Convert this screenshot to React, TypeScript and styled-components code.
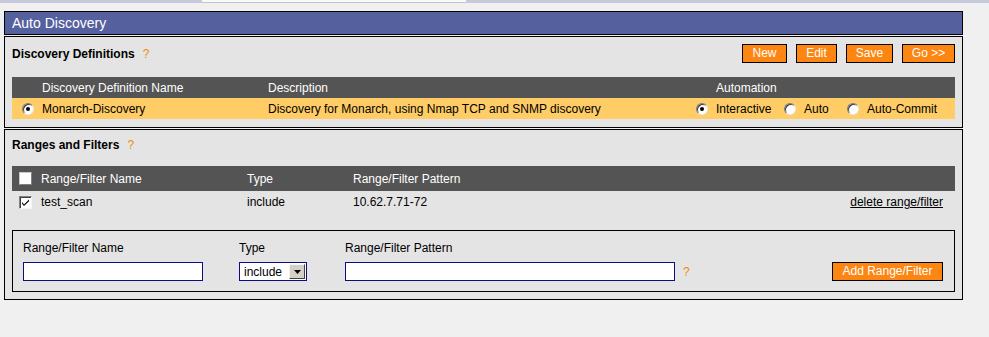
import React from 'react';
import styled, { createGlobalStyle } from 'styled-components';

const GlobalStyle = createGlobalStyle`
	html, body {
		margin: 0;
		padding: 0;
		background: #f0f0f0;
		font-family: "Liberation Sans", Arial, sans-serif;
		font-size: 12px;
		color: #000;
	}
`;

const TopStrip = styled.div`
	display: flex;
	height: 3px;
`;

const StripPart = styled.div<{ $w?: number; $active?: boolean }>`
	width: ${(p) => (p.$w ? `${p.$w}px` : 'auto')};
	flex: ${(p) => (p.$w ? 'none' : '1')};
	background: ${(p) => (p.$active ? '#fafafa' : '#c6c9da')};
	border-bottom: ${(p) => (p.$active ? '1px solid #c4c4c4' : 'none')};
	box-sizing: border-box;
`;

const Main = styled.div`
	width: 959px;
	margin: 8px 0 0 4px;
	display: flex;
	flex-direction: column;
	gap: 1px;
`;

const TitleBar = styled.div`
	height: 24px;
	box-sizing: border-box;
	border: 1px solid #000;
	background: #55609e;
	color: #fff;
	font-size: 14px;
	line-height: 22px;
	padding-left: 7px;
`;

const Section = styled.div<{ $h: number }>`
	height: ${(p) => p.$h}px;
	box-sizing: border-box;
	border: 1px solid #000;
	background: #e4e4e4;
	padding: 0 7px;
`;

const SectionHead = styled.div<{ $top: number; $h: number }>`
	display: flex;
	align-items: center;
	padding-top: ${(p) => p.$top}px;
	height: ${(p) => p.$h}px;
`;

const Heading = styled.span`
	font-weight: bold;
	font-size: 12px;
`;

const Help = styled.span`
	color: #f08a10;
	margin-left: 8px;
`;

const ButtonBar = styled.div`
	display: flex;
	gap: 9px;
	margin-left: auto;
`;

const OrangeButton = styled.button<{ $w: number }>`
	width: ${(p) => p.$w}px;
	height: 19px;
	box-sizing: border-box;
	border: 1px solid #000;
	background: #fd8612;
	color: #fff;
	font-family: "Liberation Sans", Arial, sans-serif;
	font-size: 12px;
	padding: 0;
	line-height: 17px;
	text-align: center;
`;

const DefTable = styled.div`
	margin-top: 14px;
	display: grid;
	grid-template-columns: 30px 226px 422px 1fr;
`;

const HeadCell = styled.div<{ $pad?: number; $h: number }>`
	background: #545454;
	color: #fff;
	height: ${(p) => p.$h}px;
	display: flex;
	align-items: center;
	padding-left: ${(p) => p.$pad ?? 0}px;
`;

const RowCell = styled.div<{ $pad?: number; $h: number; $bg?: string }>`
	background: ${(p) => p.$bg ?? 'transparent'};
	height: ${(p) => p.$h}px;
	display: flex;
	align-items: center;
	padding-left: ${(p) => p.$pad ?? 0}px;
`;

const Radio = styled.span<{ $checked?: boolean }>`
	position: relative;
	display: inline-block;
	width: 12px;
	height: 12px;
	box-sizing: border-box;
	border-radius: 50%;
	background: #fff;
	border: 1px solid;
	border-color: #7a7a7a #e8e8e8 #e8e8e8 #7a7a7a;
	box-shadow: inset 1px 1px 0 #3c3c3c;
	flex: none;

	&::after {
		content: '';
		display: ${(p) => (p.$checked ? 'block' : 'none')};
		position: absolute;
		left: 3px;
		top: 3px;
		width: 4px;
		height: 4px;
		border-radius: 50%;
		background: #000;
	}
`;

const RadioOption = styled.label<{ $w?: number }>`
	display: flex;
	align-items: center;
	gap: 8px;
	width: ${(p) => (p.$w ? `${p.$w}px` : 'auto')};
`;

const Checkbox = styled.span<{ $plain?: boolean }>`
	display: inline-flex;
	align-items: center;
	justify-content: center;
	width: 13px;
	height: 13px;
	box-sizing: border-box;
	background: #fff;
	border: 1px solid;
	border-color: ${(p) => (p.$plain ? '#c8c8c8 #808080 #808080 #c8c8c8' : '#808080 #f4f4f4 #f4f4f4 #808080')};
	box-shadow: ${(p) => (p.$plain ? 'none' : 'inset 1px 1px 0 #404040')};
	flex: none;
`;

const RangeTable = styled.div`
	margin-top: 13px;
	display: grid;
	grid-template-columns: 29px 206px 106px 1fr auto;
`;

const DeleteLink = styled.a`
	color: #000;
	text-decoration: underline;
	padding-right: 12px;
	cursor: pointer;
`;

const FormBox = styled.div`
	margin-top: 17px;
	box-sizing: border-box;
	border: 1px solid #000;
	padding: 10px;
	display: flex;
	align-items: flex-end;
`;

const Field = styled.div<{ $gap?: number }>`
	display: flex;
	flex-direction: column;
	gap: 7px;
	margin-right: ${(p) => p.$gap ?? 0}px;
`;

const FieldLabel = styled.label`
	line-height: 14px;
	height: 14px;
`;

const TextInput = styled.input<{ $w: number }>`
	width: ${(p) => p.$w}px;
	height: 19px;
	box-sizing: border-box;
	border: 1px solid #0c0c88;
	background: #fff;
	padding: 0 3px;
	margin: 0;
	font-family: "Liberation Sans", Arial, sans-serif;
	font-size: 12px;
	outline: none;
`;

const InputRow = styled.div`
	display: flex;
	align-items: center;
`;

const SelectBox = styled.div`
	width: 68px;
	height: 19px;
	box-sizing: border-box;
	border: 1px solid #0c0c88;
	background: #fff;
	display: flex;
	align-items: center;
	padding-left: 4px;
	gap: 2px;
`;

const SelectText = styled.span`
	flex: 1;
`;

const SelectArrow = styled.span`
	width: 16px;
	height: 15px;
	box-sizing: border-box;
	background: #d4d0c8;
	border: 1px solid;
	border-color: #f4f4f4 #404040 #404040 #f4f4f4;
	display: flex;
	align-items: center;
	justify-content: center;
	margin-right: 1px;
`;

const AddButton = styled(OrangeButton)`
	margin-left: auto;
	margin-right: 1px;
`;

export default function App() {
	return (
		<>
			<GlobalStyle />
			<TopStrip>
				<StripPart $w={202} />
				<StripPart $w={264} $active />
				<StripPart />
			</TopStrip>
			<Main>
				<TitleBar>Auto Discovery</TitleBar>

				<Section $h={92}>
					<SectionHead $top={7} $h={19}>
						<Heading>Discovery Definitions</Heading>
						<Help>?</Help>
						<ButtonBar>
							<OrangeButton $w={45}>New</OrangeButton>
							<OrangeButton $w={41}>Edit</OrangeButton>
							<OrangeButton $w={47}>Save</OrangeButton>
							<OrangeButton $w={53}>Go &gt;&gt;</OrangeButton>
						</ButtonBar>
					</SectionHead>
					<DefTable>
						<HeadCell $h={21} />
						<HeadCell $h={21}>Discovery Definition Name</HeadCell>
						<HeadCell $h={21}>Description</HeadCell>
						<HeadCell $h={21} $pad={26}>Automation</HeadCell>

						<RowCell $h={21} $bg="#ffcc66" $pad={10}>
							<Radio $checked />
						</RowCell>
						<RowCell $h={21} $bg="#ffcc66">Monarch-Discovery</RowCell>
						<RowCell $h={21} $bg="#ffcc66">Discovery for Monarch, using Nmap TCP and SNMP discovery</RowCell>
						<RowCell $h={21} $bg="#ffcc66" $pad={6}>
							<RadioOption $w={88}>
								<Radio $checked />
								Interactive
							</RadioOption>
							<RadioOption $w={63}>
								<Radio />
								Auto
							</RadioOption>
							<RadioOption>
								<Radio />
								Auto-Commit
							</RadioOption>
						</RowCell>
					</DefTable>
				</Section>

				<Section $h={171}>
					<SectionHead $top={6} $h={17}>
						<Heading>Ranges and Filters</Heading>
						<Help>?</Help>
					</SectionHead>
					<RangeTable>
						<HeadCell $h={25} $pad={7}>
							<Checkbox $plain />
						</HeadCell>
						<HeadCell $h={25}>Range/Filter Name</HeadCell>
						<HeadCell $h={25}>Type</HeadCell>
						<HeadCell $h={25}>Range/Filter Pattern</HeadCell>
						<HeadCell $h={25} />

						<RowCell $h={22} $pad={7}>
							<Checkbox>
								<svg width="9" height="9" viewBox="0 0 9 9">
									<path d="M1 4 L3 6.5 L8 1.5 L8 3.2 L3 8 L1 5.8 Z" fill="#000" />
								</svg>
							</Checkbox>
						</RowCell>
						<RowCell $h={22}>test_scan</RowCell>
						<RowCell $h={22}>include</RowCell>
						<RowCell $h={22}>10.62.7.71-72</RowCell>
						<RowCell $h={22}>
							<DeleteLink>delete range/filter</DeleteLink>
						</RowCell>
					</RangeTable>

					<FormBox>
						<Field $gap={36}>
							<FieldLabel>Range/Filter Name</FieldLabel>
							<TextInput $w={180} />
						</Field>
						<Field $gap={38}>
							<FieldLabel>Type</FieldLabel>
							<SelectBox>
								<SelectText>include</SelectText>
								<SelectArrow>
									<svg width="7" height="4" viewBox="0 0 7 4">
										<path d="M0 0 H7 L3.5 4 Z" fill="#000" />
									</svg>
								</SelectArrow>
							</SelectBox>
						</Field>
						<Field>
							<FieldLabel>Range/Filter Pattern</FieldLabel>
							<InputRow>
								<TextInput $w={330} />
								<Help>?</Help>
							</InputRow>
						</Field>
						<AddButton $w={111}>Add Range/Filter</AddButton>
					</FormBox>
				</Section>
			</Main>
		</>
	);
}
